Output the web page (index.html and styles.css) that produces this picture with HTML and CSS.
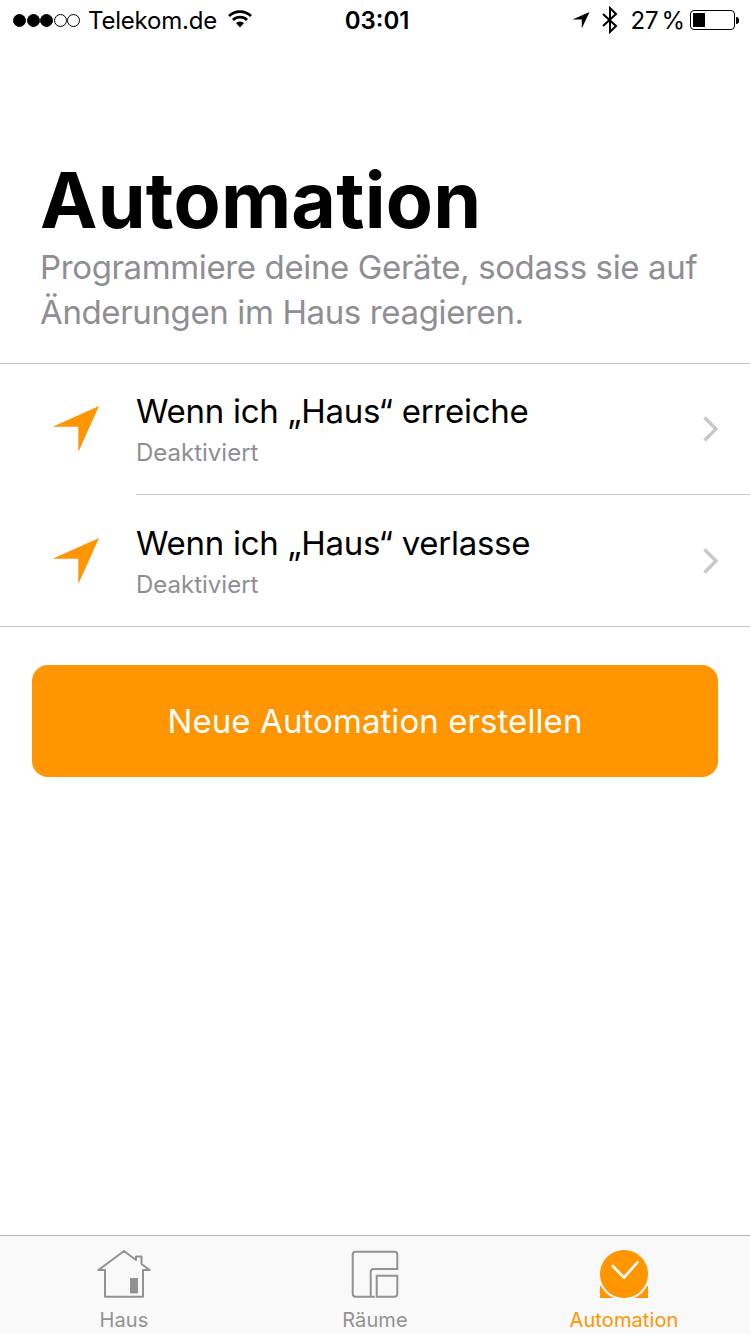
FILE: index.html
```html
<!DOCTYPE html>
<html lang="de">
  <head>
    <meta charset="UTF-8">
    <title>Automation</title>
    <link rel="stylesheet" href="styles.css">
  </head>

  <body>
    <div class="screen">
      <div class="status-bar">
        <div class="status-left">
          <span class="signal">
            <i class="dot on"></i><i class="dot on"></i><i class="dot on"></i><i class="dot"></i><i class="dot"></i>
          </span>
          <span class="carrier">Telekom.de</span>
          <svg class="wifi" width="26" height="18" viewBox="0 0 26 18">
            <path d="M13 17.5 L9 13 A6 6 0 0 1 17 13 Z" fill="#000"/>
            <path d="M6 10 A10 10 0 0 1 20 10" fill="none" stroke="#000" stroke-width="2.8"/>
            <path d="M2 6 A16 16 0 0 1 24 6" fill="none" stroke="#000" stroke-width="2.8"/>
          </svg>
        </div>
        <div class="status-time">03:01</div>
        <div class="status-right">
          <svg class="loc" width="18" height="18" viewBox="0 0 18 18">
            <path d="M17.5 1 L0.5 8.6 L9.8 8.6 L9.8 17.5 Z" fill="#000"/>
          </svg>
          <svg class="bt" width="18" height="28" viewBox="0 0 18 28">
            <path d="M2 8 L15 20 L9 26 L9 2 L15 8 L2 20" fill="none" stroke="#000" stroke-width="2"/>
          </svg>
          <span class="percent">27 %</span>
          <span class="battery"><span class="battery-level" style="width: 27%"></span></span>
          <span class="battery-tip"></span>
        </div>
      </div>

      <div class="header">
        <h1>Automation</h1>
        <p>Programmiere deine Geräte, sodass sie auf Änderungen im Haus reagieren.</p>
      </div>

      <div class="list">
        <div class="row">
          <svg class="arrow" width="48" height="48" viewBox="0 0 48 48">
            <path d="M47 1 L0.7 21.7 L26.3 21.7 L26.3 47 Z" fill="#ff9500"/>
          </svg>
          <div class="row-body">
            <div class="row-text">
              <div class="row-title">Wenn ich „Haus“ erreiche</div>
              <div class="row-sub">Deaktiviert</div>
            </div>
            <svg class="chevron" width="18" height="28" viewBox="0 0 18 28">
              <path d="M2.5 2.5 L14 14 L2.5 25.5" fill="none" stroke="#c7c7cc" stroke-width="3.4"/>
            </svg>
          </div>
        </div>
        <div class="row">
          <svg class="arrow" width="48" height="48" viewBox="0 0 48 48">
            <path d="M47 1 L0.7 21.7 L26.3 21.7 L26.3 47 Z" fill="#ff9500"/>
          </svg>
          <div class="row-body">
            <div class="row-text">
              <div class="row-title">Wenn ich „Haus“ verlasse</div>
              <div class="row-sub">Deaktiviert</div>
            </div>
            <svg class="chevron" width="18" height="28" viewBox="0 0 18 28">
              <path d="M2.5 2.5 L14 14 L2.5 25.5" fill="none" stroke="#c7c7cc" stroke-width="3.4"/>
            </svg>
          </div>
        </div>
      </div>

      <button class="create">Neue Automation erstellen</button>

      <div class="tab-bar">
        <div class="tab">
          <svg width="56" height="52" viewBox="0 0 56 52">
            <path d="M9 22 L9 48.7 L47 48.7 L47 22 M2.5 22 L28 3 L40 12 L40 8.5 L45.5 8.5 L45.5 16 L53.5 22" fill="none" stroke="#929292" stroke-width="2" stroke-linejoin="round" stroke-linecap="round"/>
            <path d="M2.5 22 L9 22 M47 22 L53.5 22" fill="none" stroke="#929292" stroke-width="2" stroke-linecap="round"/>
            <rect x="34" y="30" width="8" height="15.4" fill="#929292"/>
          </svg>
          <span>Haus</span>
        </div>
        <div class="tab">
          <svg width="56" height="52" viewBox="0 0 56 52">
            <path d="M27.7 48.7 L8.7 48.7 Q5.7 48.7 5.7 45.7 L5.7 6.7 Q5.7 3.7 8.7 3.7 L47.3 3.7 Q50.3 3.7 50.3 6.7 L50.3 21 L26.7 21 Q23.7 21 23.7 24 L23.7 48.7 Z" fill="none" stroke="#929292" stroke-width="2"/>
            <path d="M29.7 27.7 L50.3 27.7 L50.3 45.7 Q50.3 48.7 47.3 48.7 L29.7 48.7 Z" fill="none" stroke="#929292" stroke-width="2"/>
          </svg>
          <span>Räume</span>
        </div>
        <div class="tab active">
          <svg width="56" height="52" viewBox="0 0 56 52">
            <rect x="4" y="38" width="48" height="12" fill="#ff9500"/>
            <circle cx="28" cy="26" r="26" fill="#f9f9f9"/>
            <circle cx="28" cy="26" r="24" fill="#ff9500"/>
            <path d="M16.7 18 L28 29.7 L41.3 14.3" fill="none" stroke="#fff" stroke-width="2.6" stroke-linecap="round" stroke-linejoin="round"/>
          </svg>
          <span>Automation</span>
        </div>
      </div>
    </div>
  </body>
</html>
```

FILE: styles.css
```css
body {
  margin: 0;
  background-color: #fff;
  font-family: Inter, 'Liberation Sans', sans-serif;
  color: #000;
}

.screen {
  width: 750px;
  height: 1334px;
  display: flex;
  flex-direction: column;
  overflow: hidden;
}

/* Status bar */
.status-bar {
  height: 40px;
  flex-shrink: 0;
  display: grid;
  grid-template-columns: 1fr auto 1fr;
  align-items: center;
  padding: 0 11px 0 13px;
  font-size: 24px;
}

.status-left {
  display: flex;
  align-items: center;
}

.signal {
  display: flex;
  gap: 0.5px;
  margin-right: 8px;
}

.dot {
  width: 13px;
  height: 13px;
  box-sizing: border-box;
  border: 1px solid #000;
  border-radius: 50%;
}

.dot.on {
  background-color: #000;
}

.carrier {
  letter-spacing: -0.2px;
}

.wifi {
  margin-left: 10px;
  margin-top: -2px;
}

.status-time {
  margin-left: 2px;
  font-weight: 600;
}

.status-right {
  display: flex;
  align-items: center;
  justify-content: flex-end;
}

.bt {
  margin-left: 11px;
}

.percent {
  margin-left: 11px;
  word-spacing: -4px;
}

.battery {
  width: 45px;
  height: 20px;
  box-sizing: border-box;
  border: 1px solid #000;
  border-radius: 4px;
  padding: 2px;
  margin-left: 5px;
  display: flex;
}

.battery-level {
  background-color: #000;
  min-width: 12px;
}

.battery-tip {
  width: 3px;
  height: 7px;
  margin-left: 1px;
  background-color: #000;
  border-radius: 0 3px 3px 0;
}

/* Header */
.header {
  padding: 115px 40px 28px;
}

h1 {
  margin: 0;
  font-size: 77px;
  line-height: 90px;
  font-weight: 700;
  letter-spacing: 0.2px;
}

.header p {
  margin: 0;
  font-size: 33px;
  line-height: 45px;
  letter-spacing: -0.37px;
  color: #8e8e93;
  width: 680px;
}

/* List */
.list {
  border-top: 1px solid #c8c7cc;
  border-bottom: 1px solid #c8c7cc;
}

.row {
  display: flex;
  align-items: center;
}

.arrow {
  margin-left: 52px;
  margin-right: 36px;
  flex-shrink: 0;
}

.row + .row .arrow {
  margin-top: 2px;
}

.row-body {
  flex: 1;
  height: 130px;
  display: flex;
  align-items: center;
  justify-content: space-between;
  padding-right: 30px;
}

.row + .row .row-body {
  padding-top: 1px;
  border-top: 1px solid #c8c7cc;
}

.row-title {
  font-size: 33px;
  line-height: 40px;
  letter-spacing: -0.27px;
}

.row-sub {
  font-size: 24px;
  line-height: 30px;
  margin-top: 7px;
  color: #8e8e93;
}

/* Button */
.create {
  margin: 38px 32px 0;
  height: 112px;
  flex-shrink: 0;
  border: none;
  border-radius: 16px;
  background-color: #ff9500;
  color: #fff;
  font-family: inherit;
  font-size: 33px;
  font-weight: 400;
  letter-spacing: 0.08px;
}

/* Tab bar */
.tab-bar {
  margin-top: auto;
  height: 98px;
  flex-shrink: 0;
  display: grid;
  grid-template-columns: 248px 254px 244px;
  border-top: 1px solid #b2b2b2;
  background-color: #f9f9f9;
}

.tab {
  display: flex;
  flex-direction: column;
  align-items: center;
  padding-top: 12px;
  font-size: 20px;
  letter-spacing: 0.1px;
  color: #929292;
}

.tab svg {
  display: block;
}

.tab span {
  margin-top: 8px;
}

.tab.active {
  color: #ff9500;
}
```
